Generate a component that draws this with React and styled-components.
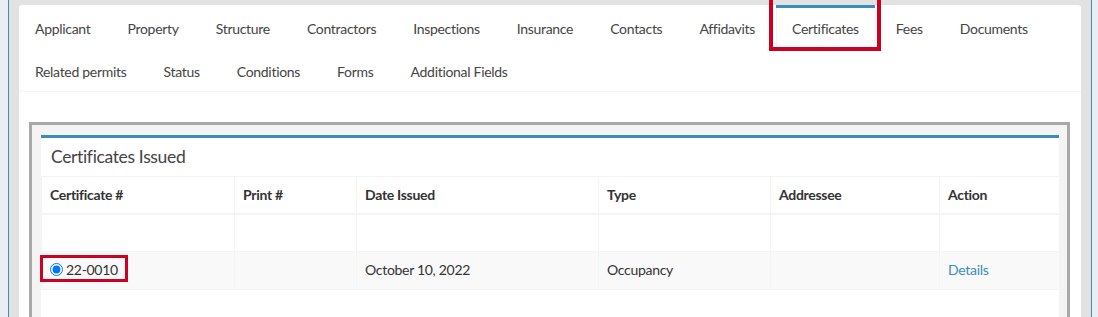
import React from "react";
import styled, { createGlobalStyle } from "styled-components";

const Global = createGlobalStyle`
  html, body { margin: 0; padding: 0; }
  body {
    background: #eaeef3;
    font-family: "Source Sans Pro", Lato, "Liberation Sans", sans-serif;
    font-size: 14px;
    letter-spacing: -0.3px;
    color: #333;
    overflow: hidden;
  }
  * { box-sizing: border-box; }
`;

const Frame = styled.div`
  margin: 0 6px 0 8px;
  min-height: 317px;
  border-left: 1px solid #3c8dbc;
  border-right: 1px solid #3c8dbc;
  background: #e2e2e2;
  padding: 5px 10px 0 10px;
`;

const Card = styled.div`
  background: #fff;
  border-radius: 3px 3px 0 0;
  min-height: 320px;
`;

const Tabs = styled.ul`
  list-style: none;
  margin: 0;
  padding: 0;
  display: flex;
  flex-wrap: wrap;
  border-bottom: 1px solid #f4f4f4;
`;

const Tab = styled.li`
  position: relative;
  border-top: 3px solid ${(p) => (p.$active ? "#3c8dbc" : "transparent")};
  margin: 0 5px -2px 0;
`;

const TabLink = styled.a`
  display: block;
  padding: 10px 15px;
  line-height: 20px;
  color: #444;
  text-decoration: none;
  border: 1px solid transparent;
  border-left-color: ${(p) => (p.$active ? "#f4f4f4" : "transparent")};
  border-right-color: ${(p) => (p.$active ? "#f4f4f4" : "transparent")};
  background: ${(p) => (p.$active ? "#fff" : "transparent")};
`;

const Highlight = styled.span`
  position: absolute;
  border: ${(p) => p.$w}px solid #cc0022;
  pointer-events: none;
`;

const TabContent = styled.div`
  padding: 30px 11px 0 10px;
`;

const Frame2 = styled.div`
  border: 3px solid #a9a9a9;
  border-bottom: none;
  background: #f4f4f4;
  padding: 10px 8px 0 9px;
  min-height: 200px;
`;

const Box = styled.div`
  background: #fff;
  border-top: 3px solid #3c8dbc;
  min-height: 190px;
`;

const BoxHeader = styled.div`
  padding: 9px 10px 10px;
`;

const BoxTitle = styled.h3`
  margin: 0;
  font-size: 17.5px;
  letter-spacing: -0.35px;
  line-height: 19px;
  font-weight: 400;
  color: #444;
`;

const Table = styled.table`
  width: 100%;
  border-collapse: collapse;
  table-layout: fixed;
  border: 1px solid #f4f4f4;
`;

const Th = styled.th`
  text-align: left;
  font-weight: 700;
  color: #333;
  padding: 8px;
  line-height: 20px;
  border: 1px solid #f4f4f4;
  border-bottom-width: 2px;
`;

const Row = styled.tr`
  background: ${(p) => (p.$striped ? "#f9f9f9" : "#fff")};
`;

const Td = styled.td`
  padding: 8px;
  line-height: 20px;
  height: 37px;
  border: 1px solid #f4f4f4;
  color: #333;
`;

const CertWrap = styled.span`
  position: relative;
  display: inline-flex;
  align-items: center;
  gap: 3px;
`;

const Radio = styled.input`
  margin: 0;
  width: 13px;
  height: 13px;
`;

const Link = styled.a`
  color: #3c8dbc;
  text-decoration: none;
`;

const tabs1 = ["Applicant", "Property", "Structure", "Contractors", "Inspections", "Insurance", "Contacts", "Affidavits", "Certificates", "Fees", "Documents"];
const tabs2 = ["Related permits", "Status", "Conditions", "Forms", "Additional Fields"];

const cols = [
  { label: "Certificate #", w: 193 },
  { label: "Print #", w: 122 },
  { label: "Date Issued", w: 242 },
  { label: "Type", w: 172 },
  { label: "Addressee", w: 169 },
  { label: "Action", w: 120 },
];

export default function App() {
  return (
    <>
      <Global />
      <Frame>
        <Card>
          <Tabs>
            {[...tabs1, ...tabs2].map((t, i) => {
              const active = t === "Certificates";
              return (
                <React.Fragment key={t}>
                  {i === tabs1.length && <li style={{ flexBasis: "100%", height: 0 }} />}
                  <Tab $active={active}>
                    <TabLink href="#" $active={active}>{t}</TabLink>
                    {active && (
                      <Highlight $w={4} style={{ top: -12, bottom: -1, left: -7, right: -6 }} />
                    )}
                  </Tab>
                </React.Fragment>
              );
            })}
          </Tabs>
          <TabContent>
            <Frame2>
              <Box>
                <BoxHeader>
                  <BoxTitle>Certificates Issued</BoxTitle>
                </BoxHeader>
                <Table>
                  <colgroup>
                    {cols.map((c) => (
                      <col key={c.label} style={{ width: c.w }} />
                    ))}
                  </colgroup>
                  <thead>
                    <tr>
                      {cols.map((c) => (
                        <Th key={c.label}>{c.label}</Th>
                      ))}
                    </tr>
                  </thead>
                  <tbody>
                    <Row>
                      {cols.map((c) => (
                        <Td key={c.label} />
                      ))}
                    </Row>
                    <Row $striped>
                      <Td>
                        <CertWrap>
                          <Radio type="radio" name="cert" defaultChecked />
                          22-0010
                          <Highlight $w={3} style={{ top: -5, bottom: -2, left: -10, right: -10 }} />
                        </CertWrap>
                      </Td>
                      <Td />
                      <Td>October 10, 2022</Td>
                      <Td>Occupancy</Td>
                      <Td />
                      <Td>
                        <Link href="#">Details</Link>
                      </Td>
                    </Row>
                  </tbody>
                </Table>
              </Box>
            </Frame2>
          </TabContent>
        </Card>
      </Frame>
    </>
  );
}
